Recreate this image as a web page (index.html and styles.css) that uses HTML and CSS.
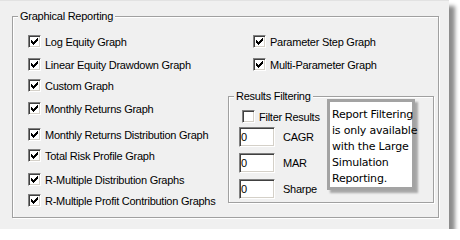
FILE: index.html
```html
<!DOCTYPE html>
<html lang="en">
<head>
  <meta charset="UTF-8">
  <meta name="viewport" content="width=device-width, initial-scale=1.0">
  <title>Graphical Reporting</title>
  <link rel="stylesheet" href="styles.css">
</head>
<body>
  <div class="panel">
    <div class="group reporting">
      <div class="group-title">Graphical Reporting</div>
      <div class="reporting-body">
        <div class="graph-list">
          <label class="check"><span class="box checked"></span>Log Equity Graph</label>
          <label class="check"><span class="box checked"></span>Linear Equity Drawdown Graph</label>
          <label class="check"><span class="box checked"></span>Custom Graph</label>
          <label class="check"><span class="box checked"></span>Monthly Returns Graph</label>
          <label class="check"><span class="box checked"></span>Monthly Returns Distribution Graph</label>
          <label class="check"><span class="box checked"></span>Total Risk Profile Graph</label>
          <label class="check"><span class="box checked"></span>R-Multiple Distribution Graphs</label>
          <label class="check"><span class="box checked"></span>R-Multiple Profit Contribution Graphs</label>
        </div>

        <div class="side">
          <div class="side-checks">
            <label class="check"><span class="box checked"></span>Parameter Step Graph</label>
            <label class="check"><span class="box checked"></span>Multi-Parameter Graph</label>
          </div>

          <div class="group results">
            <div class="group-title">Results Filtering</div>
            <div class="results-body">
              <div class="filters">
                <label class="check filter-check"><span class="box"></span>Filter Results</label>
                <div class="field"><input type="text" value="0"><span>CAGR</span></div>
                <div class="field"><input type="text" value="0"><span>MAR</span></div>
                <div class="field"><input type="text" value="0"><span>Sharpe</span></div>
              </div>
              <div class="note">Report Filtering<br>is only available<br>with the Large<br>Simulation<br>Reporting.</div>
            </div>
          </div>
        </div>
      </div>
    </div>
  </div>

  <script>
    // classic 7x7 pixel tick, drawn into every checked box
    const tick = '<svg width="13" height="13" viewBox="0 0 13 13" shape-rendering="crispEdges">' +
      '<polygon fill="#000" points="3,5 4,5 4,6 5,6 5,7 6,7 6,6 7,6 7,5 8,5 8,4 9,4 9,3 10,3 10,6 9,6 9,7 8,7 8,8 7,8 7,9 6,9 6,10 5,10 5,9 4,9 4,8 3,8"/></svg>';

    document.querySelectorAll('.box.checked').forEach(box => {
      box.innerHTML = tick;
    });
  </script>
</body>
</html>
```

FILE: styles.css
```css
* {
  box-sizing: border-box;
}

body {
  margin: 0;
  background: #fff;
  font-family: "Liberation Sans", Arial, sans-serif;
  font-size: 11px;
  letter-spacing: -0.25px;
  color: #000;
}

.panel {
  width: 449px;
  height: 229px;
  padding: 16px 0 0 12px;
  background: #f0f0f0;
  border-top: 1px solid #e2e2e2;
  box-shadow: 6px 6px 4px rgba(0, 0, 0, 0.45);
}

.panel > .group {
  margin-top: -1px;
}

.group {
  border: 1px solid #a0a0a0;
  box-shadow: inset 1px 1px 0 #fff, 1px 1px 0 #fff;
}

.group-title {
  width: fit-content;
  margin: -7px 0 0 5px;
  padding: 0 2px;
  line-height: 13px;
  background: #f0f0f0;
}

.reporting {
  width: 427px;
  height: 202px;
}

.reporting-body {
  display: grid;
  grid-template-columns: 215px 206px;
  padding-top: 8px;
}

.graph-list {
  display: grid;
  grid-template-rows: 23px 21px 23px 26px 21px 24px 21px 21px;
  padding-left: 15px;
}

.check {
  display: flex;
  align-items: center;
  gap: 4px;
  height: 21px;
  white-space: nowrap;
}

.box {
  flex: none;
  width: 13px;
  height: 13px;
  background: #fff;
  border: 1px solid;
  border-color: #808080 #fff #fff #808080;
  box-shadow: inset 1px 1px 0 #404040, inset -1px -1px 0 #d4d0c8;
  position: relative;
}

.box svg {
  display: block;
  margin: -1px;
}

.side-checks {
  display: grid;
  grid-template-rows: 23px 21px;
  padding-left: 25px;
}

.results {
  width: 206px;
  height: 107px;
  margin-top: 21px;
}

.results-body {
  display: flex;
  align-items: flex-start;
}

.filters {
  padding: 3px 0 0 10px;
}

.filter-check {
  margin-left: 3px;
}

.field {
  display: flex;
  align-items: center;
  gap: 8px;
  height: 20px;
}

.field + .field {
  margin-top: 6px;
}

.field input {
  width: 36px;
  height: 20px;
  padding: 0 1px;
  font: inherit;
  letter-spacing: inherit;
  color: #000;
  background: #fff;
  border: 1px solid;
  border-color: #808080 #fff #fff #808080;
  box-shadow: inset 1px 1px 0 #404040, inset -1px -1px 0 #d4d0c8;
  outline: none;
}

.note {
  width: 88px;
  height: 91px;
  margin: -4px 18px 0 auto;
  padding: 5px 0 0 2px;
  font-family: "DejaVu Sans", Verdana, sans-serif;
  font-size: 11px;
  letter-spacing: -0.2px;
  line-height: 16px;
  white-space: nowrap;
  background: #fff;
  border: 3px solid #a3a3a3;
  box-shadow: 3px 3px 2px rgba(0, 0, 0, 0.3);
}
```
